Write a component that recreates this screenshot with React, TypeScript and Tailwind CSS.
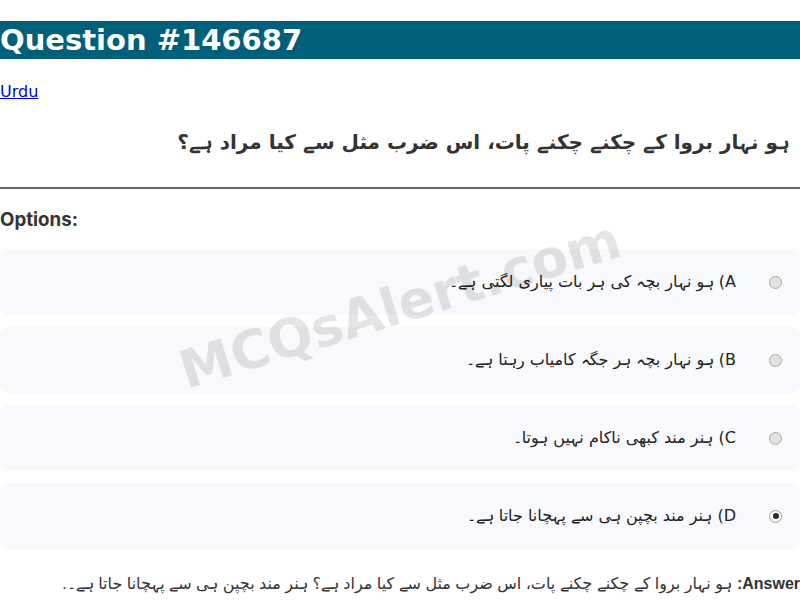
const question = "ہو نہار بروا کے چکنے چکنے پات، اس ضرب مثل سے کیا مراد ہے؟";

const options = [
  { key: "A", text: "ہو نہار بچہ کی ہر بات پیاری لگتی ہے۔" },
  { key: "B", text: "ہو نہار بچہ ہر جگہ کامیاب رہتا ہے۔" },
  { key: "C", text: "ہنر مند کبھی ناکام نہیں ہوتا۔" },
  { key: "D", text: "ہنر مند بچپن ہی سے پہچانا جاتا ہے۔" },
];

const answer = "D";

function Radio({ checked }: { checked: boolean }) {
  if (checked) {
    return (
      <span className="flex h-[13px] w-[13px] shrink-0 items-center justify-center rounded-full border border-[#9a9a9a] bg-white">
        <span className="h-[6px] w-[6px] rounded-full bg-[#2a2a2a]" />
      </span>
    );
  }
  return <span className="h-[13px] w-[13px] shrink-0 rounded-full border border-[#a8a8a8] bg-[#e2e2e2]" />;
}

export default function App() {
  return (
    <div className="relative min-h-[609px] bg-white font-['DejaVu_Sans',sans-serif] text-[#333]">
      <h1 className="mt-[21px] mb-[21px] bg-[#00607a] text-[29px] font-bold leading-[38px] text-white">
        Question #146687
      </h1>

      <a href="#" className="text-base leading-[18px] text-[#0000ee] underline">
        Urdu
      </a>

      <h2 dir="rtl" className="mt-[24px] pr-[10px] text-[20px] font-bold leading-[28px] text-[#333]">
        {question}
      </h2>

      <hr className="mt-[31px] border-t-2 border-[#666]" />

      <h3 className="mt-[19px] font-['Inter',sans-serif] text-[18.7px] font-bold leading-[24px] text-[#333]">
        Options:
      </h3>

      <div className="mt-[17px] flex flex-col gap-3">
        {options.map((o) => (
          <div
            key={o.key}
            dir="rtl"
            className="flex h-[66px] items-center gap-[33px] rounded-lg bg-[#f8f9fc] pr-[18px] text-base text-[#222]"
          >
            <Radio checked={o.key === answer} />
            <span>
              {o.key}) {o.text}
            </span>
          </div>
        ))}
      </div>

      <p dir="rtl" className="mt-[24px] font-['Liberation_Sans','DejaVu_Sans',sans-serif] text-base leading-[22px] text-[#333]">
        <b>Answer:</b> {question} {options[3].text}.
      </p>

      <div className="pointer-events-none fixed inset-0 flex items-center justify-center">
        <span className="-rotate-[17deg] whitespace-nowrap text-[53px] font-bold text-black/[0.1]">
          MCQsAlert.com
        </span>
      </div>
    </div>
  );
}
